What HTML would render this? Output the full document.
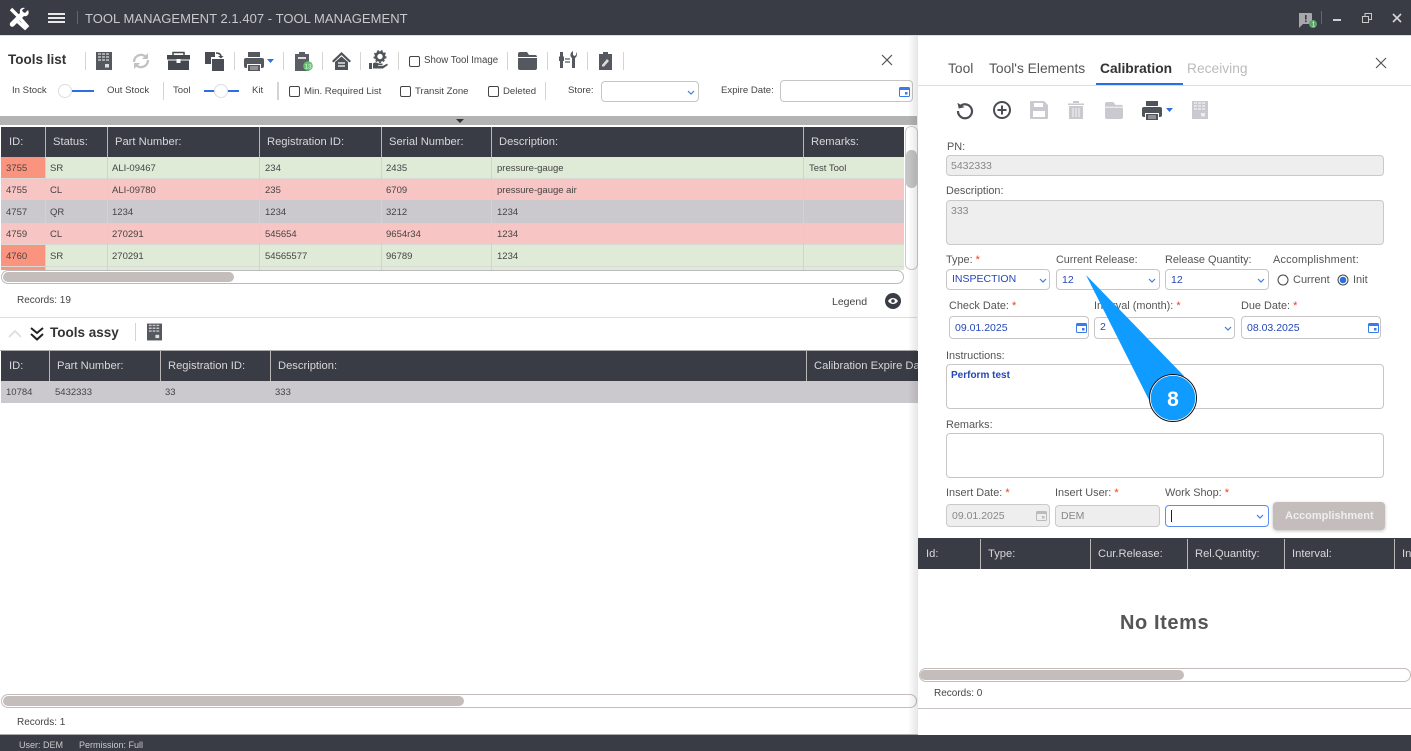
<!DOCTYPE html>
<html><head><meta charset="utf-8"><style>
html,body{margin:0;padding:0;background:#fff}
#p{position:relative;width:1411px;height:751px;overflow:hidden;background:#fff;font-family:"Liberation Sans",sans-serif;color:#444}
#p div,#p span.t{position:absolute}
.t{white-space:nowrap;line-height:16px;font-size:10.5px;color:#444}
.b{background:#393c44}
.hd{color:#d8d8da;font-size:11.2px}
.c{font-size:9.5px;color:#444}
.l{font-size:10.9px;color:#555}
.v{font-size:10.5px;color:#2547b5}
.r{color:#f03a17}
.s{width:1px;background:#d4d4d4}
.cb{width:9px;height:9px;border:1px solid #444;border-radius:2px;background:#fff}
.in{box-sizing:border-box;border:1px solid #c9c5c5;border-radius:4px;background:#fff}
.dis{background:#eee;border-color:#c9c9c9}
.vl{width:1px;background:#b9b6b6}
.cl{width:1px;background:#d2d2d2}
svg{position:absolute;overflow:visible}
</style></head><body><div id="p">

<div class="b" style="left:0;top:0;width:1411px;height:35px"></div>
<div style="left:0;top:35px;width:1411px;height:1px;background:#ddd"></div>
<svg style="left:8px;top:7px" width="22" height="22" viewBox="0 0 22 22"><path d="M3 2l8 8M11 10l8 9-2 2-9-8" stroke="#fff" stroke-width="3.4" fill="none"/><path d="M20 3l-3 3-2-1-1-2 3-2c-3-1-6 1-5 5L2 16c-1 3 2 5 4 3L16 9c3 1 6-2 4-6z" fill="#fff"/></svg>
<div style="left:48px;top:13px;width:17px;height:2px;background:#e8e8e8"></div>
<div style="left:48px;top:17px;width:17px;height:2px;background:#e8e8e8"></div>
<div style="left:48px;top:21px;width:17px;height:2px;background:#e8e8e8"></div>
<div style="left:77px;top:11px;width:1px;height:13px;background:#666"></div>
<span class="t" style="left:85px;top:11px;font-size:13px;color:#c9cacc;letter-spacing:.04px">TOOL MANAGEMENT 2.1.407 - TOOL MANAGEMENT</span>
<svg style="left:1298px;top:12px" width="20" height="17" viewBox="0 0 20 17"><path d="M1 1h12a1 1 0 0 1 1 1v9a1 1 0 0 1-1 1H5l-4 4z" fill="#a6a8ac"/><rect x="7" y="3" width="1.6" height="4.5" fill="#393c44"/><rect x="7" y="8.5" width="1.6" height="1.6" fill="#393c44"/><circle cx="15" cy="12" r="4" fill="#5aa469"/><text x="13.6" y="14.5" font-size="7" fill="#dfe" font-family="Liberation Sans">1</text></svg>
<div style="left:1321px;top:11px;width:1px;height:13px;background:#666"></div>
<div style="left:1333px;top:19px;width:8px;height:2px;background:#d0d0d0"></div>
<svg style="left:1362px;top:13px" width="10" height="10" viewBox="0 0 10 10"><path d="M.5 3.500h6v6h-6zM3 3.500V.5h6.500v6H6.500" fill="none" stroke="#c8c8c8" stroke-width="1"/></svg>
<svg style="left:1392px;top:13px" width="10" height="10" viewBox="0 0 10 10"><path d="M1 1l8 8M9 1l-8 8" stroke="#d8d8d8" stroke-width="1.600"/></svg>

<span class="t" style="left:8px;top:52px;font-size:13.500px;font-weight:bold;color:#333">Tools list</span>
<div class="s" style="left:85px;top:52px;height:18px"></div>
<svg style="left:96px;top:52px" width="16" height="18" viewBox="0 0 16 18"><rect width="16" height="18" fill="#55585f"/><path d="M2 2h12M2 5h12M2 8h12" stroke="#c5c6c9" stroke-width="1.500" stroke-dasharray="3 1"/><rect x="9" y="12" width="4" height="3.500" fill="#ddd"/></svg>
<svg style="left:131px;top:51px" width="20" height="20" viewBox="0 0 20 20"><path d="M3 11a7 7 0 0 1 12-5M17 9a7 7 0 0 1-12 5" fill="none" stroke="#c2c2c2" stroke-width="2.400"/><path d="M17 2v6h-6zM3 18v-6h6z" fill="#c2c2c2"/></svg>
<svg style="left:167px;top:52px" width="23" height="18" viewBox="0 0 23 18"><path d="M6 3V.5h11V3" fill="none" stroke="#44474e" stroke-width="1.500"/><path d="M0 3h23v4.500H0zM1 8.500h21V18H1z" fill="#44474e"/><rect x="9.500" y="7" width="4" height="4" fill="#fff"/></svg>
<svg style="left:205px;top:51px" width="19" height="20" viewBox="0 0 19 20"><path d="M0 1h10v5H6v7H0z" fill="#4a4d54"/><rect x="7" y="8" width="12" height="12" fill="#4a4d54"/><path d="M11 2c3 0 5 1 5 4" fill="none" stroke="#4a4d54" stroke-width="1.500"/><path d="M13 5l3 2.500L18.500 5z" fill="#4a4d54"/></svg>
<div class="s" style="left:234px;top:52px;height:18px"></div>
<svg style="left:244px;top:52px" width="20" height="19" viewBox="0 0 20 19"><rect x="4" y="0" width="12" height="5" fill="#55585f"/><path d="M2 6h16a2 2 0 0 1 2 2v6a2 2 0 0 1-2 2h-1v-4H3v4H2a2 2 0 0 1-2-2V8a2 2 0 0 1 2-2z" fill="#55585f"/><path d="M4 13h12v6H4z" fill="#55585f"/><path d="M6 15h8M6 17h8" stroke="#ccc"/></svg>
<svg style="left:267px;top:59px" width="7" height="4"><path d="M0 0h7L3.500 4z" fill="#2d6fe0"/></svg>
<div class="s" style="left:283px;top:52px;height:18px"></div>
<svg style="left:295px;top:51px" width="20" height="20" viewBox="0 0 20 20"><path d="M0 3h4V1h6v2h4v17H0z" fill="#5b5e65"/><path d="M3 6h8v2H3z" fill="#ddd"/><circle cx="13" cy="15" r="4.800" fill="#62c26e"/><text x="13" y="17.300" text-anchor="middle" font-size="6.500" fill="#e8f5e8" font-family="Liberation Sans">13</text></svg>
<div class="s" style="left:322px;top:52px;height:18px"></div>
<svg style="left:332px;top:52px" width="19" height="18" viewBox="0 0 19 18"><path d="M9.500 0L19 9l-1.500 1.500L9.500 3 1.500 10.500 0 9z" fill="#50535a"/><path d="M3 10l6.500-5.500L16 10v8H3z" fill="#50535a"/><path d="M6 11h7M6 14h7" stroke="#fff" stroke-width="1.200"/></svg>
<div class="s" style="left:360px;top:52px;height:18px"></div>
<svg style="left:369px;top:51px" width="19" height="19" viewBox="0 0 19 19"><circle cx="11" cy="5.500" r="4" fill="none" stroke="#50535a" stroke-width="2.600"/><circle cx="11" cy="5.500" r="5.800" fill="none" stroke="#50535a" stroke-width="1.400" stroke-dasharray="2 2"/><path d="M0 12h3v6H0zM4 12.500c2-1.500 4-1 6 0h3.500v1.500H9v.8h5l4-2 1 1.200-5 3.500H4z" fill="#50535a"/></svg>
<div class="s" style="left:398px;top:52px;height:18px"></div>
<div class="cb" style="left:409px;top:56px"></div>
<span class="t" style="left:424px;top:53px;font-size:9.700px">Show Tool Image</span>
<div class="s" style="left:507px;top:52px;height:18px"></div>
<svg style="left:518px;top:52px" width="19" height="18" viewBox="0 0 19 18"><path d="M2 0h7l2 3h6a2 2 0 0 1 2 2H0V2a2 2 0 0 1 2-2zM0 6h19v10a2 2 0 0 1-2 2H2a2 2 0 0 1-2-2z" fill="#55585f"/></svg>
<div class="s" style="left:547px;top:52px;height:18px"></div>
<svg style="left:557px;top:51px" width="20" height="19" viewBox="0 0 20 19"><path d="M3 1h3v4l1 1v4H6v7H3v-7H2V6l1-1zM16 0v4l1.500 1L19 4V1c1.500 2 1 5-1 6v10h-3V7c-2-1-2.500-5 1-7z" fill="#55585f"/><path d="M8 8h5M8 11h5" stroke="#55585f" stroke-width="1.300"/></svg>
<div class="s" style="left:587px;top:52px;height:18px"></div>
<svg style="left:599px;top:52px" width="13" height="18" viewBox="0 0 13 18"><path d="M0 2h4V0h5v2h4v16H0z" fill="#55585f"/><path d="M3 13l5-6 2 2-5 5.500H3z" fill="#ddd"/></svg>
<div class="s" style="left:623px;top:52px;height:18px"></div>
<svg style="left:882px;top:55px" width="10" height="10" viewBox="0 0 10 10"><path d="M0 0l10 10M10 0L0 10" stroke="#555" stroke-width="1.200"/></svg>

<span class="t" style="left:12px;top:83px;font-size:9.600px">In Stock</span>
<div style="left:72px;top:90px;width:22px;height:2px;background:#2b6fe3"></div>
<div style="left:58px;top:84px;width:12px;height:12px;background:#fff;border:1px solid #ddd;border-radius:50%"></div>
<span class="t" style="left:107px;top:83px;font-size:9.600px">Out Stock</span>
<div class="s" style="left:163px;top:82px;height:18px"></div>
<span class="t" style="left:173px;top:83px;font-size:9.600px">Tool</span>
<div style="left:204px;top:90px;width:35px;height:2px;background:#2b6fe3"></div>
<div style="left:214px;top:84px;width:12px;height:12px;background:#fff;border:1px solid #ddd;border-radius:50%"></div>
<span class="t" style="left:252px;top:83px;font-size:9.600px">Kit</span>
<div class="s" style="left:277px;top:82px;height:18px;width:2px"></div>
<div class="cb" style="left:289px;top:86px"></div>
<span class="t" style="left:304px;top:84px;font-size:9.600px">Min. Required List</span>
<div class="cb" style="left:400px;top:86px"></div>
<span class="t" style="left:415px;top:84px;font-size:9.600px">Transit Zone</span>
<div class="cb" style="left:488px;top:86px"></div>
<span class="t" style="left:503px;top:84px;font-size:9.600px">Deleted</span>
<div class="s" style="left:545px;top:82px;height:18px"></div>
<span class="t" style="left:568px;top:83px;font-size:9.600px">Store:</span>
<div class="in" style="left:601px;top:81px;width:98px;height:21px"></div>
<svg style="left:687px;top:90px" width="8" height="5"><path d="M1 1l3 3 3-3" fill="none" stroke="#3b7be8" stroke-width="1.200"/></svg>
<span class="t" style="left:721px;top:83px;font-size:9.600px">Expire Date:</span>
<div class="in" style="left:780px;top:80px;width:133px;height:22px"></div>
<svg style="left:899px;top:86px" width="11" height="11" viewBox="0 0 11 11"><rect x=".5" y="1.500" width="10" height="9" rx="1" fill="#fff" stroke="#3b7be8"/><rect x=".5" y="1.500" width="10" height="2.500" fill="#3b7be8"/><rect x="6" y="6" width="2.500" height="2.500" fill="#3b7be8"/></svg>

<div style="left:0;top:116px;width:917px;height:9px;background:#b3b3b3"></div>
<svg style="left:456px;top:119px" width="8" height="4"><path d="M0 0h8L4 4z" fill="#333"/></svg>

<div class="b" style="left:1px;top:127px;width:903px;height:30px"></div>
<div class="vl" style="left:45px;top:127px;height:30px"></div>
<div class="vl" style="left:107px;top:127px;height:30px"></div>
<div class="vl" style="left:259px;top:127px;height:30px"></div>
<div class="vl" style="left:381px;top:127px;height:30px"></div>
<div class="vl" style="left:491px;top:127px;height:30px"></div>
<div class="vl" style="left:803px;top:127px;height:30px"></div>
<span class="t hd" style="left:9px;top:134px">ID:</span>
<span class="t hd" style="left:53px;top:134px">Status:</span>
<span class="t hd" style="left:115px;top:134px">Part Number:</span>
<span class="t hd" style="left:267px;top:134px">Registration ID:</span>
<span class="t hd" style="left:389px;top:134px">Serial Number:</span>
<span class="t hd" style="left:499px;top:134px">Description:</span>
<span class="t hd" style="left:811px;top:134px">Remarks:</span>

<div style="left:1px;top:157px;width:903px;height:113px;background:#d8dad6"></div>
<div style="left:1px;top:157px;width:903px;height:21px;background:#dfead7"></div>
<div style="left:1px;top:179px;width:903px;height:21px;background:#f7c5c3"></div>
<div style="left:1px;top:200px;width:903px;height:23px;background:#cbc9cd"></div>
<div style="left:1px;top:223px;width:903px;height:21px;background:#f7c5c3"></div>
<div style="left:1px;top:245px;width:903px;height:21px;background:#dfead7"></div>
<div style="left:1px;top:267px;width:903px;height:3px;background:#dfead7"></div>
<div style="left:1px;top:157px;width:44px;height:21px;background:#fb947f"></div>
<div style="left:1px;top:245px;width:44px;height:21px;background:#fb947f"></div>
<div style="left:1px;top:267px;width:44px;height:3px;background:#fb947f"></div>
<div class="cl" style="left:45px;top:157px;height:113px"></div>
<div class="cl" style="left:107px;top:157px;height:113px"></div>
<div class="cl" style="left:259px;top:157px;height:113px"></div>
<div class="cl" style="left:381px;top:157px;height:113px"></div>
<div class="cl" style="left:491px;top:157px;height:113px"></div>
<div class="cl" style="left:803px;top:157px;height:113px"></div>

<span class="t c" style="left:6px;top:161px">3755</span><span class="t c" style="left:50px;top:161px">SR</span><span class="t c" style="left:112px;top:161px">ALI-09467</span><span class="t c" style="left:265px;top:161px">234</span><span class="t c" style="left:386px;top:161px">2435</span><span class="t c" style="left:497px;top:161px">pressure-gauge</span><span class="t c" style="left:809px;top:161px">Test Tool</span>
<span class="t c" style="left:6px;top:183px">4755</span><span class="t c" style="left:50px;top:183px">CL</span><span class="t c" style="left:112px;top:183px">ALI-09780</span><span class="t c" style="left:265px;top:183px">235</span><span class="t c" style="left:386px;top:183px">6709</span><span class="t c" style="left:497px;top:183px">pressure-gauge air</span>
<span class="t c" style="left:6px;top:205px">4757</span><span class="t c" style="left:50px;top:205px">QR</span><span class="t c" style="left:112px;top:205px">1234</span><span class="t c" style="left:265px;top:205px">1234</span><span class="t c" style="left:386px;top:205px">3212</span><span class="t c" style="left:497px;top:205px">1234</span>
<span class="t c" style="left:6px;top:227px">4759</span><span class="t c" style="left:50px;top:227px">CL</span><span class="t c" style="left:112px;top:227px">270291</span><span class="t c" style="left:265px;top:227px">545654</span><span class="t c" style="left:386px;top:227px">9654r34</span><span class="t c" style="left:497px;top:227px">1234</span>
<span class="t c" style="left:6px;top:249px">4760</span><span class="t c" style="left:50px;top:249px">SR</span><span class="t c" style="left:112px;top:249px">270291</span><span class="t c" style="left:265px;top:249px">54565577</span><span class="t c" style="left:386px;top:249px">96789</span><span class="t c" style="left:497px;top:249px">1234</span>

<div class="in" style="left:905px;top:126px;width:13px;height:144px;border-radius:6px;border-color:#ccc"></div>
<div style="left:906px;top:150px;width:11px;height:38px;background:#c4c4c4;border-radius:5px"></div>
<div class="in" style="left:1px;top:270px;width:903px;height:14px;border-radius:7px;border-color:#bbb"></div>
<div style="left:3px;top:272px;width:231px;height:10px;background:#c5bdbc;border-radius:5px"></div>

<span class="t" style="left:17px;top:293px;font-size:10px">Records: 19</span>
<span class="t" style="left:832px;top:294px;font-size:10.500px">Legend</span>
<svg style="left:885px;top:293px" width="16" height="16" viewBox="0 0 16 16"><circle cx="8" cy="8" r="8" fill="#393c44"/><path d="M3 8c2.500-4 7.500-4 10 0-2.500 4-7.500 4-10 0z" fill="#fff"/><circle cx="8" cy="8" r="1.800" fill="#393c44"/></svg>
<div style="left:0;top:317px;width:917px;height:1px;background:#ddd"></div>

<svg style="left:8px;top:329px" width="14" height="9"><path d="M1 8l6-6 6 6" fill="none" stroke="#ddd" stroke-width="1.600"/></svg>
<svg style="left:30px;top:327px" width="14" height="14"><path d="M1 1l6 5 6-5M1 7l6 5.500L13 7" fill="none" stroke="#222" stroke-width="2"/></svg>
<span class="t" style="left:50px;top:325px;font-size:13.500px;font-weight:bold;color:#333">Tools assy</span>
<div class="s" style="left:135px;top:323px;height:18px"></div>
<svg style="left:147px;top:323px" width="15" height="18" viewBox="0 0 16 18"><rect width="16" height="18" fill="#55585f"/><path d="M2 2h12M2 5h12M2 8h12" stroke="#c5c6c9" stroke-width="1.500" stroke-dasharray="3 1"/><rect x="9" y="12" width="4" height="3.500" fill="#ddd"/></svg>

<div class="b" style="left:1px;top:351px;width:917px;height:30px"></div>
<div style="left:0;top:350px;width:917px;height:1px;background:#aaa"></div>
<div class="vl" style="left:49px;top:351px;height:30px"></div>
<div class="vl" style="left:160px;top:351px;height:30px"></div>
<div class="vl" style="left:270px;top:351px;height:30px"></div>
<div class="vl" style="left:806px;top:351px;height:30px"></div>
<span class="t hd" style="left:9px;top:358px">ID:</span>
<span class="t hd" style="left:57px;top:358px">Part Number:</span>
<span class="t hd" style="left:168px;top:358px">Registration ID:</span>
<span class="t hd" style="left:278px;top:358px">Description:</span>
<span class="t hd" style="left:814px;top:358px;width:104px;overflow:hidden;display:block">Calibration Expire Date</span>
<div style="left:1px;top:381px;width:917px;height:22px;background:#cbc9cd"></div>
<span class="t c" style="left:6px;top:385px">10784</span><span class="t c" style="left:55px;top:385px">5432333</span><span class="t c" style="left:165px;top:385px">33</span><span class="t c" style="left:275px;top:385px">333</span>

<div class="in" style="left:1px;top:694px;width:916px;height:14px;border-radius:7px;border-color:#c5bdbc"></div>
<div style="left:3px;top:696px;width:461px;height:10px;background:#c5bdbc;border-radius:5px"></div>
<span class="t" style="left:17px;top:713px;font-size:10px;margin-top:2px">Records: 1</span>

<div style="left:908px;top:36px;width:10px;height:699px;background:linear-gradient(to right,rgba(0,0,0,0),rgba(0,0,0,.1))"></div>
<div style="left:918px;top:36px;width:493px;height:699px;background:#fff"></div>

<span class="t" style="left:948px;top:61px;font-size:13.800px;color:#555">Tool</span>
<span class="t" style="left:989px;top:61px;font-size:13.800px;color:#555">Tool's Elements</span>
<span class="t" style="left:1100px;top:61px;font-size:13.800px;font-weight:bold;color:#333">Calibration</span>
<span class="t" style="left:1187px;top:61px;font-size:13.800px;color:#bbb">Receiving</span>
<div style="left:918px;top:85px;width:493px;height:1px;background:#ddd"></div>
<div style="left:1096px;top:83px;width:87px;height:2px;background:#2b6fe3"></div>
<svg style="left:1376px;top:58px" width="10" height="10" viewBox="0 0 10 10"><path d="M0 0l10 10M10 0L0 10" stroke="#555" stroke-width="1.200"/></svg>

<svg style="left:956px;top:101px" width="18" height="18" viewBox="0 0 18 18"><path d="M5 4.500A7 7 0 1 1 2 10" fill="none" stroke="#4a4d54" stroke-width="2.200"/><path d="M2 1v6h6z" fill="#4a4d54" transform="rotate(-12 5 4)"/></svg>
<svg style="left:993px;top:101px" width="18" height="18" viewBox="0 0 18 18"><circle cx="9" cy="9" r="8" fill="none" stroke="#4a4d54" stroke-width="2"/><path d="M9 4.500v9M4.500 9h9" stroke="#4a4d54" stroke-width="2"/></svg>
<svg style="left:1030px;top:101px" width="18" height="18" viewBox="0 0 18 18"><path d="M1 0h13l4 4v13a1 1 0 0 1-1 1H1a1 1 0 0 1-1-1V1a1 1 0 0 1 1-1z" fill="#c9c9cf"/><rect x="4" y="2" width="9" height="4" fill="#fff"/><rect x="3" y="10" width="12" height="6" fill="#fff"/></svg>
<svg style="left:1068px;top:101px" width="16" height="18" viewBox="0 0 16 18"><path d="M0 2.500h16V4H0zM5 0h6v2H5zM1 5h14v13H1z" fill="#c9c9cf"/><path d="M5 7v9M8 7v9M11 7v9" stroke="#eee" stroke-width="1.200"/></svg>
<svg style="left:1105px;top:102px" width="18" height="17" viewBox="0 0 19 18"><path d="M2 0h7l2 3h6a2 2 0 0 1 2 2H0V2a2 2 0 0 1 2-2zM0 6h19v10a2 2 0 0 1-2 2H2a2 2 0 0 1-2-2z" fill="#c9c9cf"/></svg>
<svg style="left:1142px;top:101px" width="20" height="19" viewBox="0 0 20 19"><rect x="4" y="0" width="12" height="5" fill="#50535a"/><path d="M2 6h16a2 2 0 0 1 2 2v6a2 2 0 0 1-2 2h-1v-4H3v4H2a2 2 0 0 1-2-2V8a2 2 0 0 1 2-2z" fill="#50535a"/><path d="M4 13h12v6H4z" fill="#50535a"/><path d="M6 15h8M6 17h8" stroke="#ccc"/></svg>
<svg style="left:1166px;top:108px" width="7" height="4"><path d="M0 0h7L3.500 4z" fill="#2d6fe0"/></svg>
<svg style="left:1192px;top:101px" width="16" height="18" viewBox="0 0 16 18"><rect width="16" height="18" fill="#c9c9cf"/><path d="M2 2h12M2 5h12M2 8h12" stroke="#eee" stroke-width="1.500" stroke-dasharray="3 1"/><rect x="9" y="12" width="4" height="3.500" fill="#eee"/></svg>

<span class="t l" style="left:947px;top:139px">PN:</span>
<div class="in dis" style="left:946px;top:155px;width:438px;height:21px"></div>
<span class="t" style="left:951px;top:158px;font-size:10.500px;color:#888">5432333</span>
<span class="t l" style="left:946px;top:183px">Description:</span>
<div class="in dis" style="left:946px;top:200px;width:438px;height:45px"></div>
<span class="t" style="left:951px;top:203px;font-size:10.500px;color:#888">333</span>

<span class="t l" style="left:946px;top:252px">Type: <span class="r">*</span></span>
<span class="t l" style="left:1056px;top:252px;font-size:10.800px">Current Release:</span>
<span class="t l" style="left:1165px;top:252px">Release Quantity:</span>
<span class="t l" style="left:1273px;top:252px;letter-spacing:.2px">Accomplishment:</span>
<div class="in" style="left:946px;top:269px;width:104px;height:21px"></div>
<span class="t" style="left:952px;top:271px;font-size:10.500px;color:#2547b5">INSPECTION</span>
<div class="in" style="left:1056px;top:269px;width:104px;height:21px"></div>
<span class="t v" style="left:1062px;top:272px">12</span>
<div class="in" style="left:1165px;top:269px;width:104px;height:21px"></div>
<span class="t v" style="left:1171px;top:272px">12</span>
<svg style="left:1039px;top:278px" width="8" height="5"><path d="M1 1l3 3 3-3" fill="none" stroke="#3b7be8" stroke-width="1.200"/></svg>
<svg style="left:1148px;top:278px" width="8" height="5"><path d="M1 1l3 3 3-3" fill="none" stroke="#3b7be8" stroke-width="1.200"/></svg>
<svg style="left:1257px;top:278px" width="8" height="5"><path d="M1 1l3 3 3-3" fill="none" stroke="#3b7be8" stroke-width="1.200"/></svg>
<svg style="left:1277px;top:274px" width="12" height="12"><circle cx="6" cy="6" r="5" fill="#fff" stroke="#444"/></svg>
<span class="t" style="left:1293px;top:272px;font-size:11px;color:#555">Current</span>
<svg style="left:1337px;top:274px" width="12" height="12"><circle cx="6" cy="6" r="5" fill="#fff" stroke="#444"/><circle cx="6" cy="6" r="3.300" fill="#2b6fe3"/></svg>
<span class="t" style="left:1353px;top:272px;font-size:11px;color:#555">Init</span>

<span class="t l" style="left:949px;top:298px">Check Date: <span class="r">*</span></span>
<span class="t l" style="left:1094px;top:298px">Interval (month): <span class="r">*</span></span>
<span class="t l" style="left:1241px;top:298px">Due Date: <span class="r">*</span></span>
<div class="in" style="left:949px;top:316px;width:140px;height:23px"></div>
<span class="t v" style="left:955px;top:320px">09.01.2025</span>
<div class="in" style="left:1094px;top:317px;width:141px;height:22px"></div>
<span class="t v" style="left:1100px;top:319px">2</span>
<div class="in" style="left:1241px;top:316px;width:140px;height:23px"></div>
<span class="t v" style="left:1247px;top:320px">08.03.2025</span>
<svg style="left:1076px;top:322px" width="11" height="11" viewBox="0 0 11 11"><rect x=".5" y="1.500" width="10" height="9" rx="1" fill="#fff" stroke="#3b7be8"/><rect x=".5" y="1.500" width="10" height="2.500" fill="#3b7be8"/><rect x="6" y="6" width="2.500" height="2.500" fill="#3b7be8"/></svg>
<svg style="left:1224px;top:326px" width="8" height="5"><path d="M1 1l3 3 3-3" fill="none" stroke="#3b7be8" stroke-width="1.200"/></svg>
<svg style="left:1368px;top:322px" width="11" height="11" viewBox="0 0 11 11"><rect x=".5" y="1.500" width="10" height="9" rx="1" fill="#fff" stroke="#3b7be8"/><rect x=".5" y="1.500" width="10" height="2.500" fill="#3b7be8"/><rect x="6" y="6" width="2.500" height="2.500" fill="#3b7be8"/></svg>

<span class="t l" style="left:946px;top:348px">Instructions:</span>
<div class="in" style="left:946px;top:364px;width:438px;height:45px"></div>
<span class="t" style="left:951px;top:368px;font-size:10px;font-weight:bold;color:#2547b5">Perform test</span>
<span class="t l" style="left:946px;top:417px">Remarks:</span>
<div class="in" style="left:946px;top:433px;width:438px;height:45px"></div>

<span class="t l" style="left:946px;top:485px">Insert Date: <span class="r">*</span></span>
<span class="t l" style="left:1055px;top:485px">Insert User: <span class="r">*</span></span>
<span class="t l" style="left:1165px;top:485px">Work Shop: <span class="r">*</span></span>
<div class="in dis" style="left:946px;top:504px;width:104px;height:23px"></div>
<span class="t" style="left:952px;top:508px;font-size:10.500px;color:#888">09.01.2025</span>
<svg style="left:1036px;top:510px" width="11" height="11" viewBox="0 0 11 11"><rect x=".5" y="1.500" width="10" height="9" rx="1" fill="none" stroke="#bbb"/><rect x=".5" y="1.500" width="10" height="2.500" fill="#bbb"/><rect x="6" y="6" width="2.500" height="2.500" fill="#bbb"/></svg>
<div class="in dis" style="left:1055px;top:505px;width:105px;height:22px"></div>
<span class="t" style="left:1061px;top:508px;font-size:10.500px;color:#888">DEM</span>
<div class="in" style="left:1165px;top:505px;width:104px;height:22px;border-color:#5b8ef0"></div>
<div style="left:1171px;top:510px;width:1px;height:12px;background:#222"></div>
<svg style="left:1256px;top:514px" width="8" height="5"><path d="M1 1l3 3 3-3" fill="none" stroke="#3b7be8" stroke-width="1.200"/></svg>
<div style="left:1273px;top:502px;width:112px;height:28px;background:#c5bdbc;border-radius:4px;box-shadow:0 1px 3px rgba(0,0,0,.25)"></div>
<span class="t" style="left:1285px;top:508px;font-size:11px;font-weight:bold;color:#eee">Accomplishment</span>

<div class="b" style="left:918px;top:538px;width:493px;height:31px"></div>
<div class="vl" style="left:980px;top:539px;height:30px"></div>
<div class="vl" style="left:1090px;top:539px;height:30px"></div>
<div class="vl" style="left:1187px;top:539px;height:30px"></div>
<div class="vl" style="left:1284px;top:539px;height:30px"></div>
<div class="vl" style="left:1394px;top:539px;height:30px"></div>
<span class="t hd" style="left:926px;top:546px">Id:</span>
<span class="t hd" style="left:988px;top:546px">Type:</span>
<span class="t hd" style="left:1098px;top:546px">Cur.Release:</span>
<span class="t hd" style="left:1195px;top:546px">Rel.Quantity:</span>
<span class="t hd" style="left:1292px;top:546px">Interval:</span>
<span class="t hd" style="left:1402px;top:546px">In</span>

<span class="t" style="left:1120px;top:615px;font-size:20px;font-weight:bold;color:#555;letter-spacing:.6px">No Items</span>
<div class="in" style="left:919px;top:668px;width:492px;height:14px;border-radius:7px;border-color:#c5bdbc"></div>
<div style="left:920px;top:670px;width:264px;height:10px;background:#c5bdbc;border-radius:5px"></div>
<span class="t" style="left:934px;top:688px;font-size:10px;margin-top:-2px;top:688px">Records: 0</span>
<div style="left:918px;top:708px;width:493px;height:1px;background:#c9c3c3"></div>

<svg style="left:0;top:0" width="1411" height="751"><path d="M1086 275L1184 376 1150 402z" fill="#0f9bff"/><circle cx="1173" cy="398" r="23" fill="#0f9bff" stroke="#fff" stroke-width="1.500"/><circle cx="1173" cy="398" r="23.500" fill="none" stroke="#111" stroke-width="1"/><text x="1173" y="406" text-anchor="middle" font-family="Liberation Sans" font-weight="bold" font-size="21" fill="#fff">8</text></svg>

<div class="b" style="left:0;top:735px;width:1411px;height:16px"></div>
<div style="left:0;top:734px;width:918px;height:1px;background:#aaa"></div>
<span class="t" style="left:19px;top:737px;font-size:9px;color:#c9cacc">User: DEM</span>
<span class="t" style="left:79px;top:737px;font-size:9px;color:#c9cacc">Permission: Full</span>
</div></body></html>
